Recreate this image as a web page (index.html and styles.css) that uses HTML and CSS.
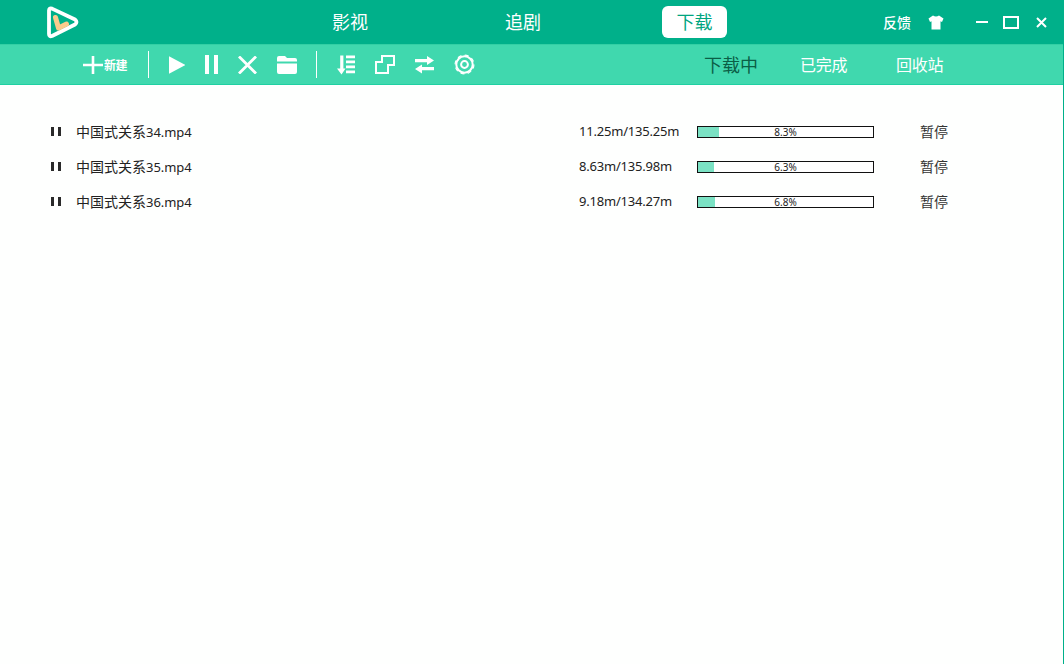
FILE: index.html
```html
<!DOCTYPE html>
<html lang="zh">
<head>
<meta charset="utf-8">
<title>下载</title>
<link rel="stylesheet" href="styles.css">
</head>
<body>
<div class="app">
  <header class="titlebar">
    <svg class="logo" width="34" height="34" viewBox="0 0 34 34">
      <path d="M4 5.5 Q4 2.5 7 3.6 L30 14.5 Q33 17 30 19.5 L7 31 Q4 32 4 29 Z" fill="none" stroke="#fff" stroke-width="3.8" stroke-linejoin="round"/>
      <path d="M10.5 12.5 L13.5 23 L21.5 19" fill="none" stroke="#fbcb8c" stroke-width="5" stroke-linecap="round" stroke-linejoin="round"/>
    </svg>
    <nav class="nav">
      <span class="nav-item nav-first">影视</span>
      <span class="nav-item nav-second">追剧</span>
      <span class="nav-item nav-active">下载</span>
    </nav>
    <span class="feedback">反馈</span>
    <svg class="shirt" width="16" height="15" viewBox="0 0 16 15"><path d="M5 .5 Q8 2.5 11 .5 L15.5 3.5 L14 7 L12.5 6.3 V14.5 H3.5 V6.3 L2 7 L.5 3.5 Z" fill="#fff"/></svg>
    <svg class="win-min" width="12" height="2" viewBox="0 0 12 2"><rect width="12" height="2" fill="#fff"/></svg>
    <svg class="win-max" width="16" height="13" viewBox="0 0 16 13"><rect x="1" y="1" width="14" height="11" fill="none" stroke="#fff" stroke-width="2"/></svg>
    <svg class="win-close" width="11" height="11" viewBox="0 0 11 11"><path d="M1 1 L10 10 M10 1 L1 10" stroke="#fff" stroke-width="2"/></svg>
  </header>

  <div class="toolbar">
    <div class="new">
      <svg width="20" height="20" viewBox="0 0 20 20"><path d="M0 10 H20 M10 1 V19" stroke="#fff" stroke-width="2.6"/></svg>
      <span class="new-label">新建</span>
    </div>
    <i class="sep sep-a"></i>
    <svg width="16.5" height="18" viewBox="0 0 17 18"><path d="M0 0 L17 9 L0 18 Z" fill="#fff"/></svg>
    <svg width="13" height="19" viewBox="0 0 13 19"><path d="M0 0 H4 V19 H0 Z M9 0 H13 V19 H9 Z" fill="#fff"/></svg>
    <svg width="19" height="18" viewBox="0 0 19 18"><path d="M1 0.5 L18 17.5 M18 0.5 L1 17.5" stroke="#fff" stroke-width="2.8"/></svg>
    <svg width="20" height="18" viewBox="0 0 20 18"><path d="M0 2 Q0 0 2 0 H8 L10 2 H18 Q20 2 20 4 V5.5 H0 Z M0 7.5 H20 V16 Q20 18 18 18 H2 Q0 18 0 16 Z" fill="#fff"/></svg>
    <i class="sep sep-b"></i>
    <svg width="18" height="20" viewBox="0 0 18 20"><path d="M0 13.5 H3.2 V0.5 H6.4 V13.5 H8.5 L4.5 19.5 Z M9 0.5 H18 V3.3 H9 Z M9 5.5 H18 V8.3 H9 Z M9 10.5 H18 V13.3 H9 Z M9 15.5 H18 V18.3 H9 Z" fill="#fff"/></svg>
    <svg width="20" height="19" viewBox="0 0 20 19"><path d="M7 7 V1 H19 V10 H13 V18 H1 V7 Z" fill="none" stroke="#fff" stroke-width="2"/></svg>
    <svg width="19" height="18" viewBox="0 0 19 18"><path d="M0 3 H12 V0 L19 4.5 L12 9 V6.2 H0 Z M19 11 H7 V8.5 L0 13 L7 17.5 V14.3 H19 Z" fill="#fff"/></svg>
    <svg width="21" height="21" viewBox="0 0 21 21"><circle cx="10.5" cy="10.5" r="8.2" fill="none" stroke="#fff" stroke-width="2"/><circle cx="10.5" cy="10.5" r="9.4" fill="none" stroke="#fff" stroke-width="1.2" stroke-dasharray="4 3.38"/><circle cx="10.5" cy="10.5" r="3.4" fill="none" stroke="#fff" stroke-width="2"/></svg>
    <div class="tabs">
      <span class="tab tab-active">下载中</span>
      <span class="tab">已完成</span>
      <span class="tab">回收站</span>
    </div>
  </div>

  <main class="list">
    <div class="row">
      <span class="pause"></span>
      <span class="name">中国式关系<span class="ext">34.mp4</span></span>
      <span class="size">11.25m/135.25m</span>
      <div class="bar"><div class="fill" style="width:12%"></div><span class="pct">8.3%</span></div>
      <span class="status">暂停</span>
    </div>
    <div class="row">
      <span class="pause"></span>
      <span class="name">中国式关系<span class="ext">35.mp4</span></span>
      <span class="size">8.63m/135.98m</span>
      <div class="bar"><div class="fill" style="width:9.1%"></div><span class="pct">6.3%</span></div>
      <span class="status">暂停</span>
    </div>
    <div class="row">
      <span class="pause"></span>
      <span class="name">中国式关系<span class="ext">36.mp4</span></span>
      <span class="size">9.18m/134.27m</span>
      <div class="bar"><div class="fill" style="width:9.7%"></div><span class="pct">6.8%</span></div>
      <span class="status">暂停</span>
    </div>
  </main>
</div>
</body>
</html>
```
FILE: styles.css
```css
* { box-sizing: border-box; }
html, body { margin: 0; height: 100%; }
body {
  font-family: "Noto Sans", "Noto Sans CJK SC", sans-serif;
  background: #fefffe;
  overflow: hidden;
}
.app {
  width: 1064px;
  height: 664px;
  border-right: 1px solid #00b08a;
  display: flex;
  flex-direction: column;
  background: #fefffe;
}
.titlebar {
  height: 44px;
  flex: none;
  background: #00b08a;
  display: flex;
  align-items: center;
  padding-left: 45px;
  color: #fff;
}
.logo { flex: none; margin-top: -1px; }
.nav { display: flex; align-items: center; margin-left: 253px; }
.nav-item { font-size: 18px; line-height: 32px; display: block; }
.nav-second { margin-left: 137px; }
.nav-active {
  margin-left: 121px;
  width: 65px;
  height: 32px;
  background: #fff;
  color: #00a57f;
  border-radius: 6px;
  text-align: center;
}
.feedback { font-size: 14px; font-weight: 500; margin-left: 156px; width: 29px; white-space: nowrap; }
.shirt { margin-left: 16px; }
.win-min { margin-left: 32px; }
.win-max { margin-left: 15px; }
.win-close { margin-left: 17px; }
.toolbar {
  height: 41px;
  flex: none;
  background: #40d8ae;
  border-top: 1px solid #33cfa4;
  border-bottom: 1px solid #1fd0a2;
  display: flex;
  align-items: center;
  gap: 20px;
  padding-left: 83px;
}
.toolbar svg { flex: none; }
.new { display: flex; align-items: center; width: 45px; }
.new-label { font-size: 12px; font-weight: 700; color: #fff; white-space: nowrap; letter-spacing: -0.5px; margin-left: 1px; }
.sep { display: block; width: 1px; height: 27px; background: #fff; flex: none; }
.sep-a { margin-right: -0.5px; }
.sep-b { margin-left: -1px; }
.tabs { display: flex; align-items: center; margin-left: 209px; }
.tab { font-size: 16px; color: #fff; width: 96px; white-space: nowrap; padding-bottom: 2px; letter-spacing: -0.2px; }
.tab-active { font-size: 18px; color: #0b5f46; letter-spacing: 0; }
.list { padding-top: 29px; flex: 1; }
.row { display: flex; align-items: center; height: 35px; padding-left: 51px; color: #222; }
.pause {
  width: 10px;
  height: 9px;
  flex: none;
  border-left: 3px solid #2a2a2a;
  border-right: 3px solid #2a2a2a;
}
.name { font-size: 14px; width: 503px; margin-left: 15px; white-space: nowrap; padding-bottom: 2px; }
.ext { font-size: 13px; letter-spacing: -0.05px; }
.size { font-size: 13px; width: 118px; white-space: nowrap; letter-spacing: -0.2px; padding-bottom: 2px; }
.bar {
  position: relative;
  width: 177px;
  height: 12px;
  border: 1px solid #111;
  background: #fff;
  flex: none;
}
.fill { height: 100%; background: #7be2c4; }
.pct {
  position: absolute;
  left: 0; right: 0; top: 0; bottom: 0;
  text-align: center;
  font-size: 10px;
  line-height: 10px;
  color: #222;
}
.status { font-size: 14px; margin-left: 46px; color: #333; padding-bottom: 2px; }
```
